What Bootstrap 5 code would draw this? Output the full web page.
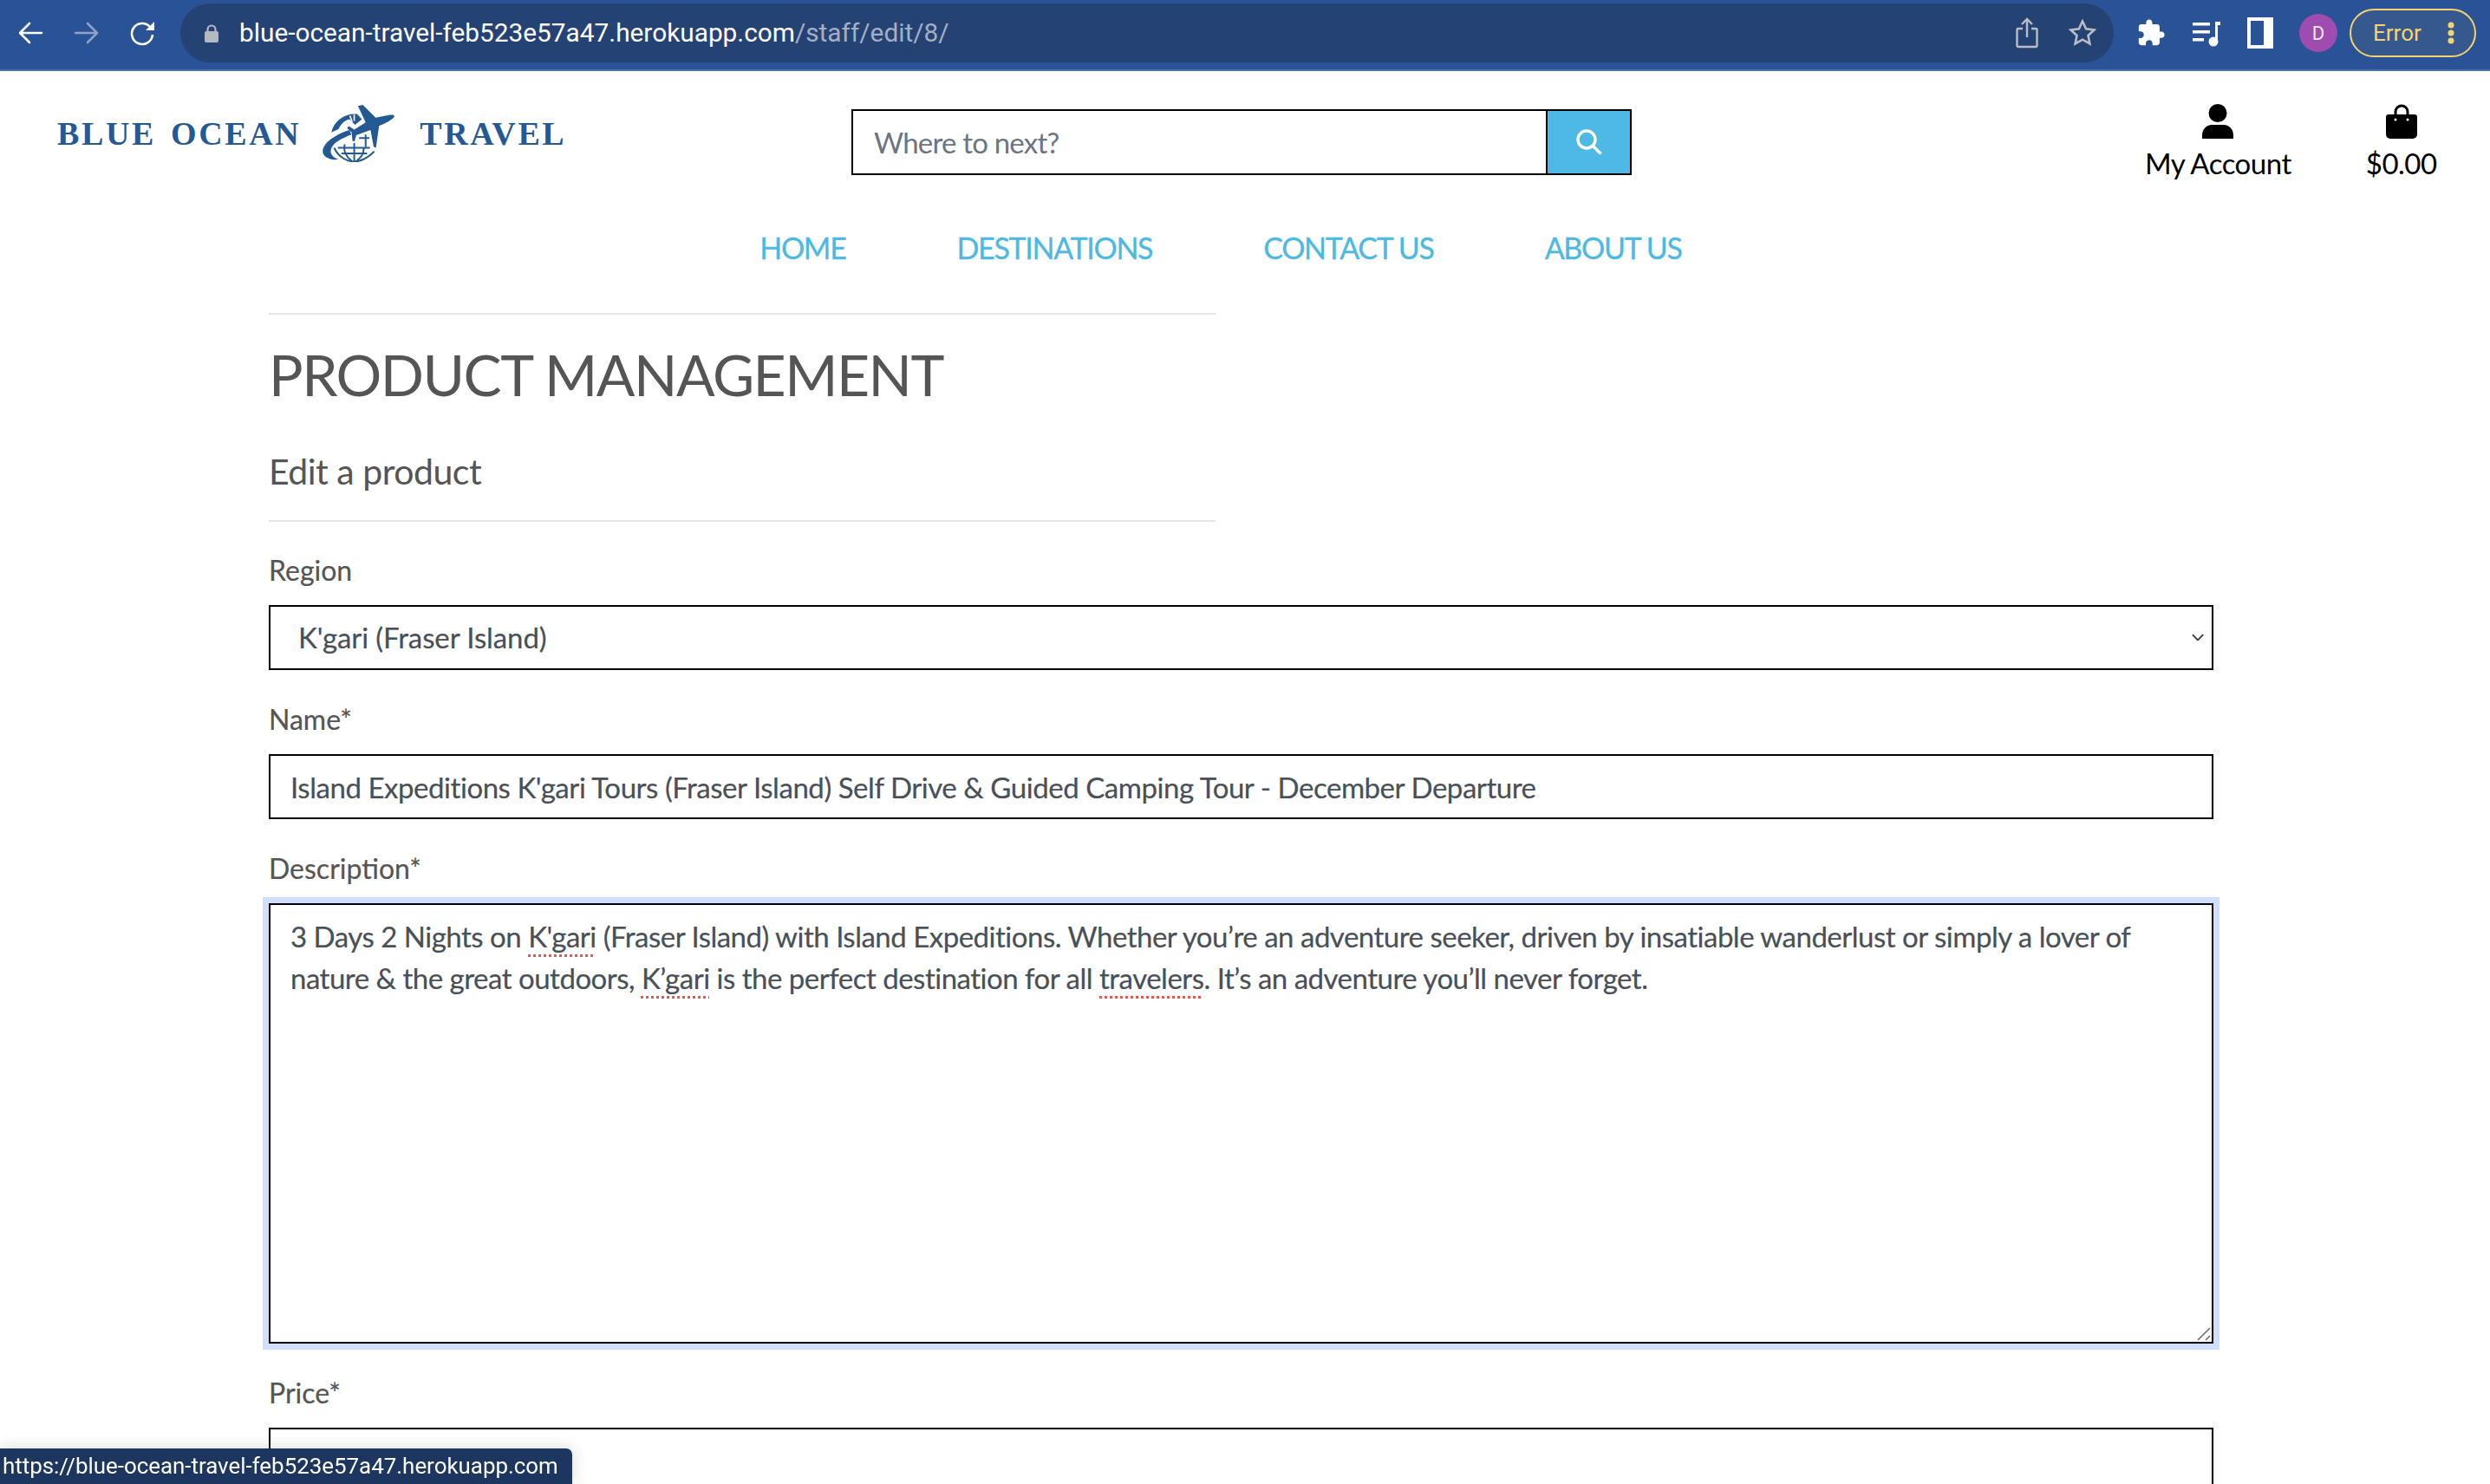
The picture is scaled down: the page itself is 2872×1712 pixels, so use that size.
<!DOCTYPE html>
<html lang="en">
  <head>
    <title>Blue Ocean Travel - edit product</title>
    <meta charset="utf-8" />
    <meta name="viewport" content="width=device-width, initial-scale=1" />
    <link href="https://cdn.jsdelivr.net/npm/bootstrap@5.3.3/dist/css/bootstrap.min.css" rel="stylesheet" />
    <script src="https://cdn.jsdelivr.net/npm/bootstrap@5.3.3/dist/js/bootstrap.bundle.min.js"></script>
    <style>
      html, body { height: 100%; overflow: hidden; }
      body { font-family: Lato, "Open Sans", sans-serif; color: #555; background: #fff; }

      /* browser chrome */
      .chrome-bar { height: 82px; background: #2a5296; border-bottom: 2px solid #4a72a8; padding: 0 0 4px 18px; font-family: Roboto, "Liberation Sans", sans-serif; }
      .chrome-btn { width: 34px; height: 34px; flex: none; }
      .chrome-nav { gap: 31px; margin-right: 26px; }
      .addr-pill { width: 2230px; height: 68px; flex: none; border-radius: 34px; background: #244273; padding: 0 20px 0 28px; font-size: 29.800px; color: #fff; }
      .addr-pill .addr-dim { color: #a3afc4; }
      .addr-lock { margin-right: 24px; }
      .pill-icons { gap: 35px; }
      .chrome-tools { gap: 30px; margin-left: 26px; }
      .avatar-dot { width: 44px; height: 44px; border-radius: 50%; background: #9e4cb0; color: #f3e6f6; font-size: 22px; flex: none; }
      .error-pill { width: 146px; height: 56px; border: 2px solid #f6d36f; border-radius: 28px; background: #35598f; color: #f6d36f; font-size: 26px; margin-left: -16px; padding: 0 23px 0 25px; }

      /* site header */
      .site-head { height: 120px; padding-left: 66px; }
      .logo-box { width: 916px; flex: none; margin-top: 39px; height: 66px; color: #245a94; }
      .logo-mark { margin: 0 29px 0 25px; flex: none; }
      .logo-word { font-family: "Liberation Serif", serif; font-size: 38px; font-weight: 700; letter-spacing: 2.600px; word-spacing: 5px; line-height: 1; }
      .search-box { width: 900px; flex: none; height: 76px; margin-top: 44px; }
      .search-box input { border: 2px solid #000; border-right: 0; border-radius: 0; height: 76px; font-size: 33px; letter-spacing: -0.800px; padding: 0 24px; box-shadow: none; }
      .search-box input::placeholder { color: #6c757d; }
      .search-btn { width: 99px; height: 76px; flex: none; border: 2px solid #000; border-radius: 0; background: #4db9e4; padding: 0; }
      .acct-links { color: #000; font-size: 33px; letter-spacing: -0.500px; line-height: 1; margin-top: 38px; margin-left: 592px; gap: 86px; }
      .acct-item { gap: 12px; }

      /* site nav */
      .main-links { gap: 128px; height: 159px; padding: 62px 56px 0 0; }
      .main-links .nav-link { padding: 0; color: #4cb9e3; font-size: 34px; line-height: 44px; letter-spacing: -1.300px; text-transform: uppercase; -webkit-text-stroke: 0.300px #4cb9e3; }

      /* form */
      .form-wrap { padding: 0 319px 0 310px; }
      .rule-half { width: 1092px; height: 2px; background: #e5e5e5; }
      .page-title { font-size: 66px; line-height: 80px; font-weight: 400; color: #555; margin: 29px 0 0; letter-spacing: -1.500px; }
      .page-sub { font-size: 41px; line-height: 50px; font-weight: 400; color: #555; letter-spacing: -0.500px; margin: 47px 0 31px; }
      .rule-gap { margin-bottom: 36px; }
      .field-label { font-size: 32px; line-height: 40px; color: #555; margin-bottom: 20px; display: block; -webkit-text-stroke: 0.200px #555; }
      .field-group { margin-bottom: 37px; }
      .form-control.field-input, .form-select.field-input { height: 75px; border: 2px solid #000; border-radius: 0; font-size: 33px; letter-spacing: -0.450px; color: #495057; padding: 0 23px; box-shadow: none; font-family: Lato, sans-serif; -webkit-text-stroke: 0.200px #495057; }
      .form-select.field-input { padding-left: 32px; letter-spacing: -0.100px; background-position: right 6px center; background-size: 20px 15px; }
      .desc-wrap { height: 508px; }
      .desc-box { height: 508px; border: 2px solid #000; border-radius: 0; font-size: 33px; letter-spacing: -0.500px; line-height: 48px; color: #495057; padding: 12px 23px; box-shadow: 0 0 0 7px #cfdffd; resize: none; -webkit-text-stroke: 0.200px #495057; }
      .spell-bad { text-decoration: underline dotted #e8574f 3px; text-underline-offset: 8px; }
      .resize-grip { position: absolute; right: 3px; bottom: 3px; }

      /* link preview bubble */
      .status-bubble { position: fixed; left: 0; bottom: 0; height: 41px; width: 660px; background: #1c3660; color: #fff; font-family: Roboto, "Liberation Sans", sans-serif; font-size: 25.900px; line-height: 41px; padding-left: 3px; border-top-right-radius: 7px; box-shadow: 0 0 18px rgba(0, 0, 0, .16); white-space: nowrap; }
    </style>
  </head>
  <body>
    <div class="chrome-bar d-flex align-items-center">
      <div class="chrome-nav d-flex align-items-center">
        <svg class="chrome-btn" viewBox="0 0 34 34" fill="none" stroke="#fff" stroke-width="2.600" stroke-linecap="round" stroke-linejoin="round"><path d="M30 17H6M16 6 5 17l11 11" /></svg>
        <svg class="chrome-btn" viewBox="0 0 34 34" fill="none" stroke="#8ea3c6" stroke-width="2.600" stroke-linecap="round" stroke-linejoin="round"><path d="M4 17h24M18 6l11 11-11 11" /></svg>
        <svg class="chrome-btn" viewBox="0 0 34 34" fill="none" stroke="#fff" stroke-width="2.600"><path d="M25 10a12 12 0 1 0 3 9" /><path d="M20 14 30 4v10z" fill="#fff" stroke="none" /></svg>
      </div>
      <div class="addr-pill d-flex align-items-center">
        <svg class="addr-lock" width="16" height="21" viewBox="0 0 16 21"><path d="M3.500 9V6a4.500 4.500 0 0 1 9 0v3" fill="none" stroke="#b5b9c2" stroke-width="2.200" /><rect y="8" width="16" height="13" rx="2" fill="#b5b9c2" /></svg>
        <span>blue-ocean-travel-feb523e57a47.herokuapp.com<span class="addr-dim">/staff/edit/8/</span></span>
        <span class="pill-icons ms-auto d-flex align-items-center">
          <svg width="26" height="36" viewBox="0 0 26 36" fill="none" stroke="#b9bdc6" stroke-width="2.400"><path d="M8 13H3a1.500 1.500 0 0 0-1.500 1.500v18A1.500 1.500 0 0 0 3 34h20a1.500 1.500 0 0 0 1.500-1.500v-18A1.500 1.500 0 0 0 23 13h-5M13 23V2M7 8l6-6 6 6" /></svg>
          <svg width="32" height="32" viewBox="0 0 32 32" fill="none" stroke="#b9bdc6" stroke-width="2.600"><path d="m16 2.500 4.100 8.800 9.400 1.200-7 6.500 1.900 9.500-8.400-4.800-8.400 4.800 1.900-9.500-7-6.500 9.400-1.200z" /></svg>
        </span>
      </div>
      <div class="chrome-tools d-flex align-items-center">
        <svg width="34" height="34" viewBox="0 0 24 24" fill="#fff"><path d="M20.500 11H19V7c0-1.100-.9-2-2-2h-4V3.500C13 2.120 11.880 1 10.500 1S8 2.120 8 3.500V5H4c-1.100 0-1.990.9-1.990 2v3.800H3.500c1.490 0 2.700 1.210 2.700 2.700s-1.210 2.700-2.700 2.700H2V20c0 1.100.9 2 2 2h3.800v-1.500c0-1.490 1.210-2.700 2.700-2.700 1.490 0 2.700 1.210 2.700 2.700V22H17c1.100 0 2-.9 2-2v-4h1.500c1.380 0 2.500-1.120 2.500-2.500S21.880 11 20.500 11z" /></svg>
        <svg width="34" height="34" viewBox="0 0 34 34" fill="#fff"><path d="M1 5h20v3.500H1zM1 14h20v3.500H1zM1 23h13v3.500H1z" /><path d="M27 4h6v4h-3v20h-3z" /><circle cx="25" cy="27" r="5.500" /></svg>
        <svg width="30" height="36" viewBox="0 0 30 36" fill="#fff"><path fill-rule="evenodd" d="M0 0h30v36H0zM4 4v28h15V4z" /></svg>
        <div class="avatar-dot d-flex align-items-center justify-content-center">D</div>
        <div class="error-pill d-flex align-items-center justify-content-between">
          <span>Error</span>
          <svg width="8" height="26" viewBox="0 0 8 26" fill="#f6d36f"><circle cx="4" cy="4" r="3.500" /><circle cx="4" cy="13" r="3.500" /><circle cx="4" cy="22" r="3.500" /></svg>
        </div>
      </div>
    </div>

    <header class="site-head d-flex align-items-start">
      <a class="logo-box d-flex align-items-center text-decoration-none" href="#">
        <span class="logo-word">BLUE OCEAN</span>
        <svg class="logo-mark" width="83" height="66" viewBox="95 62 250 200" fill="#245a94">
          <!-- globe, top half -->
          <path d="M125 158C135 115 175 90 215 94l17 18-24 20-20-20c-18 5-32 20-38 35z" />
          <path d="M205 96v22M190 100l8 22" stroke="#fff" stroke-width="5" fill="none" />
          <!-- plane -->
          <path d="M218 66l17-4 45 45 50-10c14-2 18 2 14 8-14 16-52 30-52 30l-11 77-8-4-11-58-50 18-6 22-7-2-3-30-16-15 6-7 19 12 40-25z" />
          <!-- swoosh -->
          <path d="M188 150C140 165 95 195 95 225c0 20 30 33 55 27-25-7-35-27-20-47 15-20 45-30 65-40z" />
          <!-- globe, bottom half -->
          <path d="M135 212c15 33 45 48 70 48 30 0 55-20 70-35M148 212h112M160 232h90M205 195v65M172 200c-6 22 5 45 24 58M238 212c2 18-10 35-25 46" fill="none" stroke="#245a94" stroke-width="6" />
          <path d="M222 175h36v6h-36zM242 166h6v44h-6z" />
        </svg>
        <span class="logo-word">TRAVEL</span>
      </a>
      <form class="search-box d-flex" role="search">
        <input class="form-control" type="text" placeholder="Where to next?" />
        <button class="search-btn btn d-flex align-items-center justify-content-center" type="button" aria-label="Search">
          <svg width="32" height="32" viewBox="0 0 32 32" fill="none" stroke="#fff" stroke-width="3.400"><circle cx="13" cy="13" r="10" /><path d="m20.500 20.500 9 9" /></svg>
        </button>
      </form>
      <div class="acct-links d-flex">
        <div class="acct-item d-flex flex-column align-items-center">
          <svg width="36" height="40" viewBox="0 0 36 40" fill="#000"><ellipse cx="18" cy="10.500" rx="10.500" ry="10.500" /><path d="M0 40v-4c0-7 5-12 11-12h14c6 0 11 5 11 12v4z" /></svg>
          <span>My Account</span>
        </div>
        <div class="acct-item d-flex flex-column align-items-center">
          <svg width="36" height="40" viewBox="0 0 36 40"><path d="M11 15V9a7 7 0 0 1 14 0v6" fill="none" stroke="#000" stroke-width="3" /><path d="M3 12h30a3 3 0 0 1 3 3v20a5 5 0 0 1-5 5H5a5 5 0 0 1-5-5V15a3 3 0 0 1 3-3z" fill="#000" /><circle cx="11" cy="18" r="1.500" fill="#fff" /><circle cx="25" cy="18" r="1.500" fill="#fff" /></svg>
          <span>$0.00</span>
        </div>
      </div>
    </header>

    <nav class="nav main-links justify-content-center">
      <a class="nav-link" href="#">Home</a>
      <a class="nav-link" href="#">Destinations</a>
      <a class="nav-link" href="#">Contact Us</a>
      <a class="nav-link" href="#">About Us</a>
    </nav>

    <main class="form-wrap">
      <div class="rule-half"></div>
      <h1 class="page-title">PRODUCT MANAGEMENT</h1>
      <h2 class="page-sub">Edit a product</h2>
      <div class="rule-half rule-gap"></div>
      <form>
        <div class="field-group">
          <label class="field-label" for="region">Region</label>
          <select class="form-select field-input" id="region"><option>K'gari (Fraser Island)</option></select>
        </div>
        <div class="field-group">
          <label class="field-label" for="name">Name*</label>
          <input class="form-control field-input" id="name" type="text" value="Island Expeditions K'gari Tours (Fraser Island) Self Drive &amp; Guided Camping Tour - December Departure" />
        </div>
        <div class="field-group">
          <label class="field-label" for="desc">Description*</label>
          <div class="desc-wrap position-relative">
            <div class="form-control desc-box" id="desc" role="textbox">3 Days 2 Nights on <span class="spell-bad">K'gari</span> (Fraser Island) with Island Expeditions. Whether you’re an adventure seeker, driven by insatiable wanderlust or simply a lover of nature &amp; the great outdoors, <span class="spell-bad">K’gari</span> is the perfect destination for all <span class="spell-bad">travelers</span>. It’s an adventure you’ll never forget.</div>
            <svg class="resize-grip" width="16" height="16" viewBox="0 0 16 16" stroke="#666" stroke-width="1.500"><path d="M1 15 15 1M10 15l5-5" /></svg>
          </div>
        </div>
        <div class="field-group">
          <label class="field-label" for="price">Price*</label>
          <input class="form-control field-input" id="price" type="text" />
        </div>
      </form>
    </main>

    <div class="status-bubble">https://blue-ocean-travel-feb523e57a47.herokuapp.com</div>
  </body>
</html>
